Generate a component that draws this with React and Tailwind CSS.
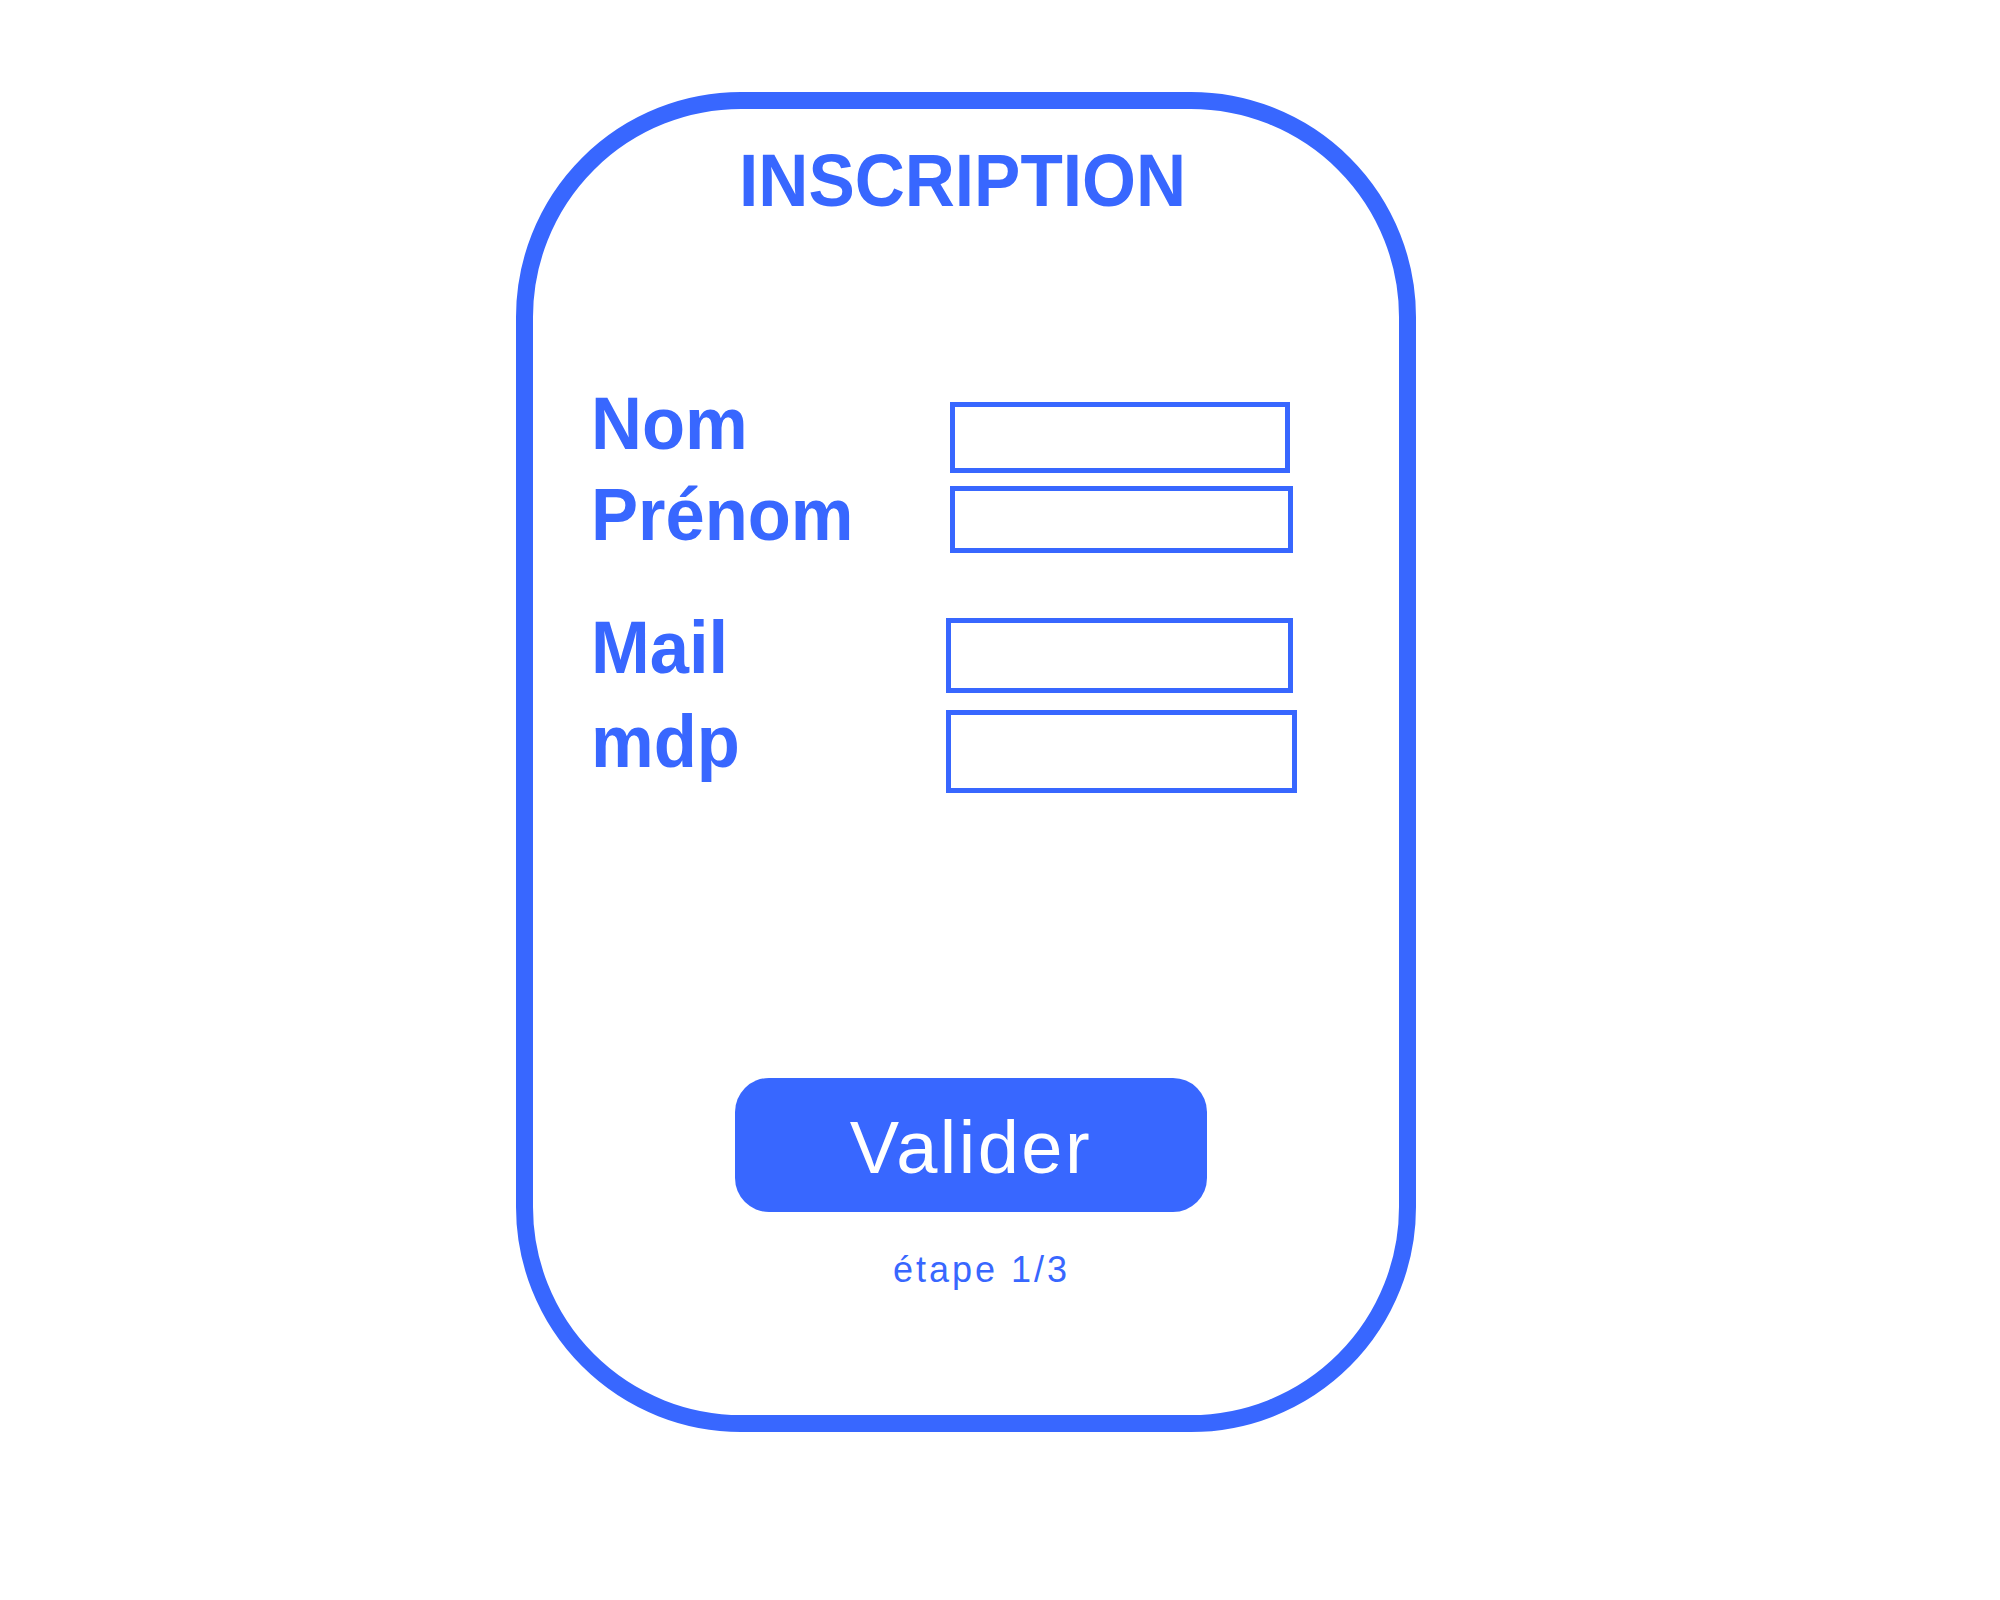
import React from "react";

const F = { fontFamily: '"Liberation Sans", Arial, sans-serif' };

function Label({ children, w }) {
  return (
    <div className={`${w} shrink-0 h-[75px] text-[75px] leading-none font-bold text-[#3867ff]`}>
      <span className="inline-block origin-left scale-x-[0.94] whitespace-nowrap">
        {children}
      </span>
    </div>
  );
}

export default function App() {
  return (
    <div className="w-[2000px] h-[1600px] bg-white overflow-hidden" style={F}>
      <div className="ml-[516px] mt-[92px] w-[900px] h-[1340px] border-[17px] border-[#3867ff] rounded-[225px] flex flex-col">
        <div className="mt-[34px] ml-[206px] h-[75px] text-[75px] leading-none font-bold text-[#3867ff]">
          <span className="inline-block origin-left scale-x-[0.925] whitespace-nowrap">
            INSCRIPTION
          </span>
        </div>

        <div className="ml-[58px] mt-[168px] flex flex-col">
          <div className="flex items-start">
            <Label w="w-[359px]">Nom</Label>
            <div className="mt-[16px] w-[340px] h-[71px] border-[5px] border-[#3867ff]" />
          </div>
          <div className="mt-[4px] flex items-start">
            <Label w="w-[359px]">Prénom</Label>
            <div className="mt-[9px] w-[343px] h-[67px] border-[5px] border-[#3867ff]" />
          </div>
          <div className="mt-[57px] flex items-start">
            <Label w="w-[355px]">Mail</Label>
            <div className="mt-[8px] w-[347px] h-[75px] border-[5px] border-[#3867ff]" />
          </div>
          <div className="mt-[11px] flex items-start">
            <Label w="w-[355px]">mdp</Label>
            <div className="mt-[6px] w-[351px] h-[83px] border-[5px] border-[#3867ff]" />
          </div>
        </div>

        <button className="mt-[285px] ml-[202px] w-[472px] h-[134px] rounded-[34px] bg-[#3867ff] flex items-center justify-center pt-[6px]">
          <span className="text-[74px] leading-none text-white tracking-[2.5px]">Valider</span>
        </button>

        <div className="mt-[40px] ml-[360px] text-[36px] leading-none text-[#3867ff] tracking-[3px] whitespace-nowrap">
          étape 1/3
        </div>
      </div>
    </div>
  );
}
